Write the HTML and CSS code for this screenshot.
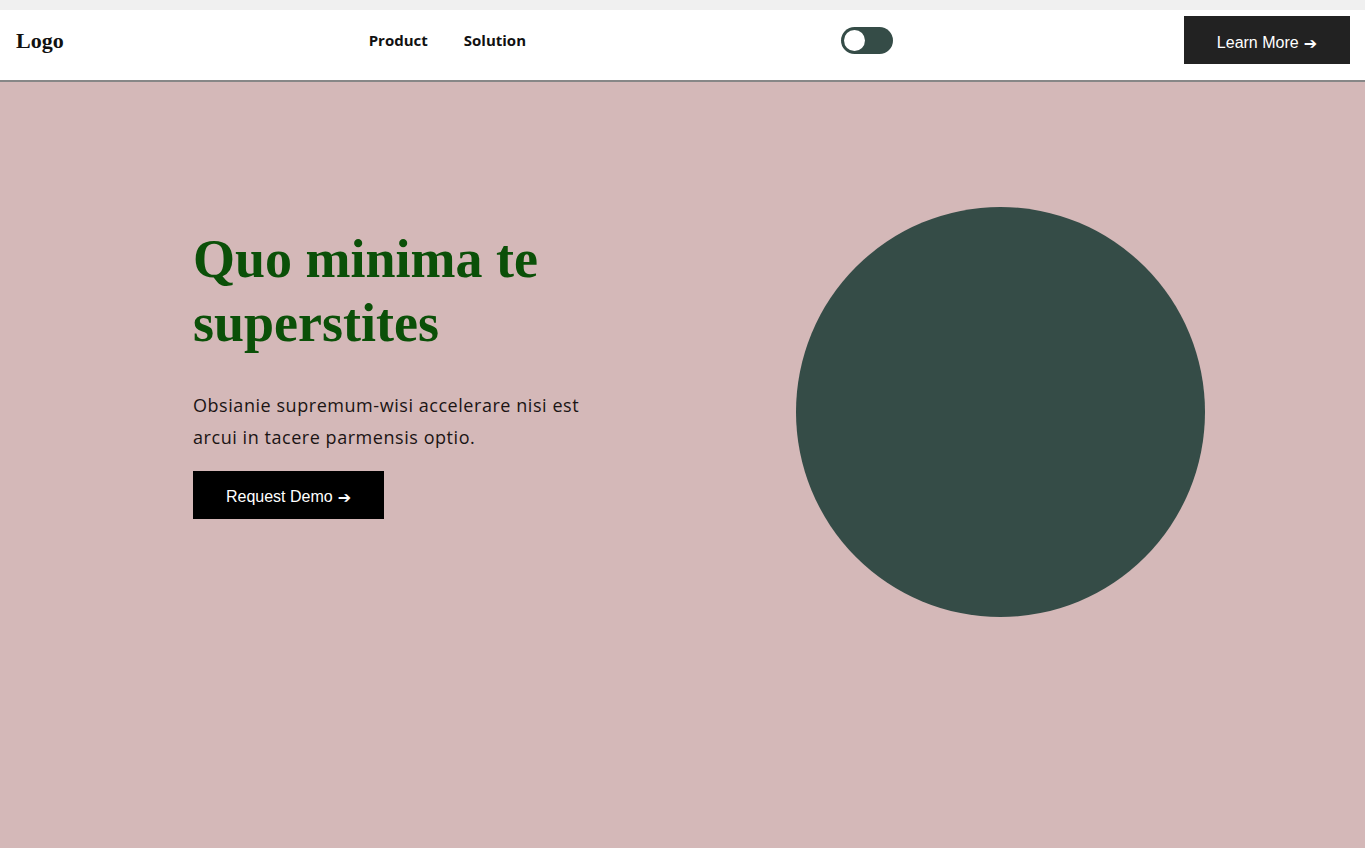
FILE: index.html
```html
<!DOCTYPE html>
<html lang="en">
<head>
<meta charset="utf-8">
<title>Landing</title>
<link rel="stylesheet" href="styles.css">
</head>
<body>
<div class="topbar"></div>
<header class="header">
  <div class="logo">Logo</div>
  <nav class="nav">
    <a class="nav-link" href="#">Product</a>
    <a class="nav-link" href="#">Solution</a>
  </nav>
  <div class="toggle"><span class="knob"></span></div>
  <a class="btn btn-dark" href="#">Learn More <span class="arrow">➔</span></a>
</header>
<main class="hero">
  <div class="hero-text">
    <h1 class="title">Quo minima te superstites</h1>
    <p class="lead">Obsianie supremum-wisi accelerare nisi est arcui in tacere parmensis optio.</p>
    <a class="btn btn-black" href="#">Request Demo <span class="arrow">➔</span></a>
  </div>
  <div class="circle"></div>
</main>
</body>
</html>
```
FILE: styles.css
```css
* { box-sizing: border-box; }
html, body { margin: 0; padding: 0; }
body {
  background: #d4b8b8;
  font-family: "Open Sans", "Liberation Sans", sans-serif;
  min-height: 848px;
}
.topbar { height: 10px; background: #f0f0f0; }
.header {
  height: 72px;
  background: #fff;
  border-bottom: 2px solid #878787;
  display: flex;
  align-items: center;
  justify-content: space-between;
  padding: 0 15px 10px 16px;
}
.logo {
  font-family: "Liberation Serif", serif;
  font-weight: 700;
  font-size: 22px;
  color: #111;
  margin-top: 2px;
}
.nav { display: flex; gap: 36px; margin-left: 14px; }
.nav-link {
  font-family: "Open Sans", sans-serif;
  font-weight: 700;
  font-size: 15px;
  color: #111;
  text-decoration: none;
}
.toggle {
  width: 52px;
  height: 27px;
  border-radius: 14px;
  background: #354c47;
  display: flex;
  align-items: center;
  padding-left: 3px;
  margin-left: 24px;
}
.knob { width: 21px; height: 21px; border-radius: 50%; background: #fff; }
.btn {
  display: inline-flex;
  align-items: center;
  justify-content: center;
  font-family: "Liberation Sans", Arial, sans-serif;
  font-size: 16px;
  color: #fff;
  text-decoration: none;
  height: 48px;
}
.arrow { font-family: "DejaVu Sans", sans-serif; font-size: 16px; font-weight: 700; margin-left: 5px; }
.btn-dark { background: #222; width: 166px; padding-top: 6px; }
.btn-black { background: #000; width: 191px; padding-top: 4px; }
.hero {
  display: flex;
  align-items: flex-start;
  padding-top: 125px;
}
.hero-text { margin-left: 193px; margin-top: 20px; width: 440px; }
.title {
  font-family: "Liberation Serif", serif;
  font-weight: 700;
  font-size: 54px;
  line-height: 64px;
  color: #0b5008;
  margin: 0 0 34px;
}
.lead {
  font-family: "Open Sans", sans-serif;
  font-size: 18px;
  letter-spacing: 0.55px;
  line-height: 32px;
  color: #1b1414;
  margin: 0 0 18px;
  width: 400px;
}
.circle {
  width: 409px;
  height: 410px;
  border-radius: 50%;
  background: #354c47;
  margin-left: auto;
  margin-right: 160px;
}
```
